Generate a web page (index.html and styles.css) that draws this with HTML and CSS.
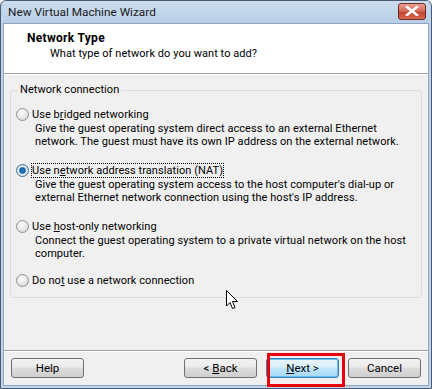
FILE: index.html
```html
<!DOCTYPE html>
<html lang="en">
<head>
<meta charset="UTF-8">
<title>New Virtual Machine Wizard</title>
<link rel="stylesheet" href="styles.css">
</head>
<body>
  <div class="window">
    <div class="titlebar">
      <span class="title">New Virtual Machine Wizard</span>
      <span class="close">
        <svg width="14" height="10" viewBox="0 0 14 10"><path d="M2 1 L12 9 M12 1 L2 9" stroke="#fff" stroke-width="2.6" stroke-linecap="square"/></svg>
      </span>
    </div>
    <div class="client">
      <div class="header">
        <div class="header-title">Network Type</div>
        <div class="header-sub">What type of network do you want to add?</div>
      </div>
      <div class="content">
        <fieldset class="group">
          <legend>Network connection</legend>
          <div class="option">
            <div class="row"><span class="radio"></span><span>Use b<u>r</u>idged networking</span></div>
            <div class="desc">Give the guest operating system direct access to an external Ethernet<br>network. The guest must have its own IP address on the external network.</div>
          </div>
          <div class="option">
            <div class="row"><span class="radio checked"></span><span class="focus">Use n<u>e</u>twork address translation (NAT)</span></div>
            <div class="desc">Give the guest operating system access to the host computer's dial-up or<br>external Ethernet network connection using the host's IP address.</div>
          </div>
          <div class="option short">
            <div class="row"><span class="radio"></span><span>Use <u>h</u>ost-only networking</span></div>
            <div class="desc">Connect the guest operating system to a private virtual network on the host<br>computer.</div>
          </div>
          <div class="option last">
            <div class="row"><span class="radio"></span><span>Do no<u>t</u> use a network connection</span></div>
          </div>
        </fieldset>
      </div>
      <div class="footer">
        <button class="btn">Help</button>
        <div class="spacer"></div>
        <button class="btn">&lt; <u>B</u>ack</button>
        <button class="btn default"><u>N</u>ext &gt;</button>
        <button class="btn">Cancel</button>
      </div>
    </div>
    <div class="highlight"></div>
    <svg class="cursor" width="14" height="22" viewBox="0 0 14 22">
      <path d="M0.5 0.5 L0.5 16 L4 12.5 L6.5 18.5 L9 17.5 L6.5 11.5 L11.5 11.5 Z" fill="#fff" stroke="#000" stroke-width="1"/>
    </svg>
  </div>
</body>
</html>
```

FILE: styles.css
```css
body {
  margin: 0;
  font-family: Roboto, "Noto Sans", sans-serif;
  font-size: 11px;
  letter-spacing: 0.06px;
  color: #000;
}
.window {
  position: relative;
  width: 432px;
  height: 389px;
  box-sizing: border-box;
  border: 1px solid #4a5a70;
  border-radius: 6px 6px 0 0;
  background: #c0d5ec;
  padding: 0 2px 2px 2px;
  display: flex;
  flex-direction: column;
  overflow: hidden;
}
.titlebar {
  height: 22px;
  display: flex;
  align-items: center;
  justify-content: space-between;
  padding: 0 3px 0 5px;
  background: linear-gradient(#cbdcee, #b9cfe7);
}
.title {
  font-size: 11.8px;
  letter-spacing: 0;
  color: #1a1a1a;
}
.close {
  width: 26px;
  height: 15px;
  margin-top: -2px;
  border: 1px solid #6b2a25;
  border-radius: 3px;
  background: linear-gradient(#e8a093, #d2644f 50%, #c0402a 51%, #d66a52);
  display: flex;
  align-items: center;
  justify-content: center;
}
.client {
  flex: 1;
  display: flex;
  flex-direction: column;
  background: #f0f0f0;
  border: 1px solid #8ea4c1;
}
.header {
  height: 50px;
  background: #fff;
  border-bottom: 1px solid #a0a0a0;
  box-shadow: 0 1px 0 #fff;
  padding: 6px 0 0 23px;
  box-sizing: border-box;
}
.header-title {
  font-weight: bold;
  font-size: 12px;
  letter-spacing: 0.3px;
  line-height: 16px;
}
.header-sub {
  line-height: 16px;
  padding-left: 23px;
}
.content {
  flex: 1;
  padding: 9px 6px 0 6px;
}
.group {
  margin: 0;
  border: 1px solid #d5dfe5;
  border-radius: 3px;
  padding: 9px 0 9px 5px;
}
.group legend {
  padding: 0 2px;
  margin-left: 2px;
  line-height: 14px;
}
.option {
  margin-bottom: 14px;
}
.option.short {
  margin-bottom: 12px;
}
.option.last {
  margin-bottom: 0;
}
.row {
  display: flex;
  align-items: center;
  height: 16px;
  gap: 3px;
}
.radio {
  width: 11px;
  height: 11px;
  border: 1px solid #8f8f8f;
  border-radius: 50%;
  background: radial-gradient(circle at 40% 35%, #fff, #e4e4e4 60%, #cfcfcf);
  display: inline-block;
  flex: none;
}
.radio.checked {
  background: radial-gradient(circle, #1b8dd8 0, #135c9c 2.5px, #7fb6e0 3.5px, #e8eef4 4px, #cfcfcf);
  border-color: #3d6f9e;
}
.focus {
  outline: 1px dotted #000;
  outline-offset: 0;
}
.desc {
  margin-left: 19px;
  line-height: 13px;
  white-space: nowrap;
}
.footer {
  height: 34px;
  border-top: 1px solid #a0a0a0;
  box-shadow: inset 0 1px 0 #fff;
  display: flex;
  align-items: center;
  gap: 9px;
  padding: 0 7px;
}
.spacer {
  flex: 1;
}
.btn {
  width: 73px;
  height: 20px;
  font-family: inherit;
  font-size: 11.5px;
  color: #000;
  border: 1px solid #707070;
  border-radius: 3px;
  background: linear-gradient(#f2f2f2, #ebebeb 45%, #dddddd 50%, #cfcfcf);
  padding: 0;
}
.btn.default {
  border-color: #3c7fb1;
  background: linear-gradient(#eaf6fd, #d9f0fc 45%, #bee6fd 50%, #a7d9f5);
  box-shadow: inset 0 0 0 1px #67c0ec;
}
.highlight {
  position: absolute;
  left: 266px;
  top: 352px;
  width: 72px;
  height: 28px;
  border: 3px solid #e8000b;
}
.cursor {
  position: absolute;
  left: 225px;
  top: 289px;
}
```
